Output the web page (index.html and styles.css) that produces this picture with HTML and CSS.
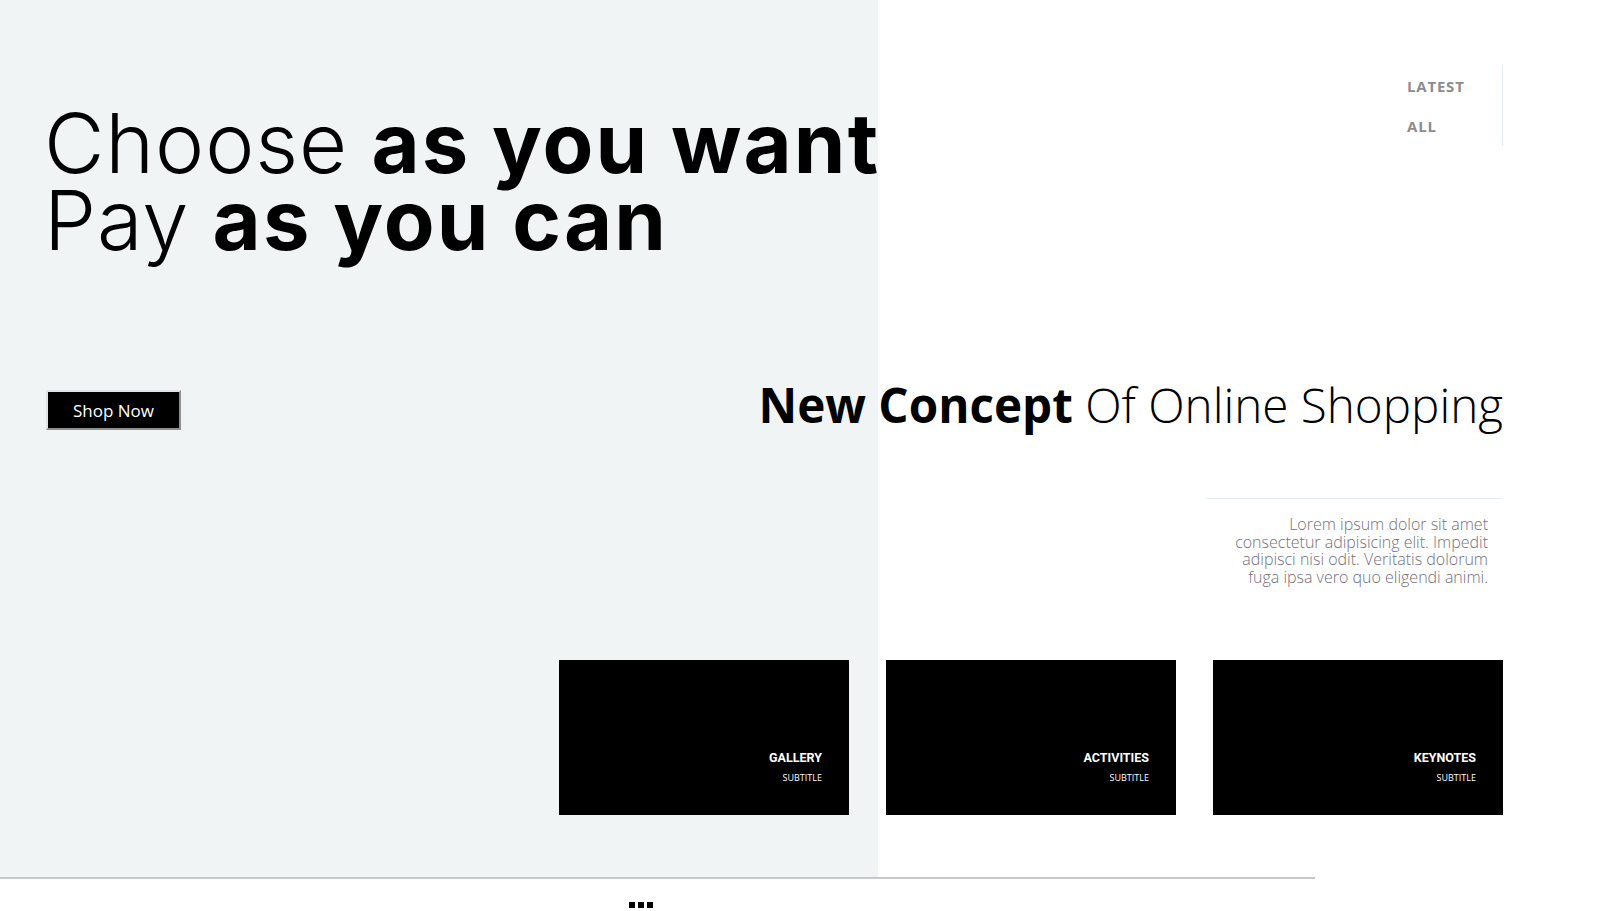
FILE: index.html
```html
<!DOCTYPE html>
<html lang="en">
<head>
<meta charset="utf-8">
<title>Choose as you want</title>
<link rel="stylesheet" href="styles.css">
</head>
<body>
<div class="page">
  <section class="hero">
    <div class="top">
      <h1 class="title"><span class="light">Choose</span> <b>as you want</b><br><span class="light">Pay</span> <b>as you can</b></h1>
      <nav class="filters">
        <a class="filter">LATEST</a>
        <a class="filter">ALL</a>
      </nav>
    </div>
    <div class="mid">
      <button class="shop" type="button">Shop Now</button>
      <h2 class="concept"><b>New Concept</b> Of Online Shopping</h2>
    </div>
    <div class="intro">
      <p>Lorem ipsum dolor sit amet<br>consectetur adipisicing elit. Impedit<br>adipisci nisi odit. Veritatis dolorum<br>fuga ipsa vero quo eligendi animi.</p>
    </div>
    <div class="cards">
      <a class="card"><span class="card-title">GALLERY</span><span class="card-sub">SUBTITLE</span></a>
      <a class="card"><span class="card-title">ACTIVITIES</span><span class="card-sub">SUBTITLE</span></a>
      <a class="card"><span class="card-title">KEYNOTES</span><span class="card-sub">SUBTITLE</span></a>
    </div>
  </section>
  <hr class="rule">
  <div class="dots"><i></i><i></i><i></i></div>
</div>
</body>
</html>
```

FILE: styles.css
```css
* { box-sizing: border-box; margin: 0; padding: 0; }
html, body { width: 1617px; height: 911px; overflow: hidden; background: #fff; }
body { font-family: "Open Sans", sans-serif; color: #000; }

.page { width: 1617px; }

.hero {
  height: 877px;
  background: linear-gradient(to right, #f1f4f5 0, #f1f4f5 878px, #fff 878px);
  padding: 0 114px 0 44px;
  display: flex;
  flex-direction: column;
}

.top { display: flex; justify-content: space-between; align-items: flex-start; }

.title {
  font-family: Inter, "DejaVu Sans", sans-serif;
  font-size: 83px;
  line-height: 77px;
  height: 154px;
  font-weight: 300;
  margin-top: 105px;
  white-space: nowrap;
}
.title .light { letter-spacing: 0.9px; }
.title b { font-weight: 700; letter-spacing: 2.1px; }

.filters {
  margin-top: 66px;
  width: 96px;
  height: 80px;
  border-right: 1px solid #e2eff1;
  display: flex;
  flex-direction: column;
}
.filter {
  display: block;
  font-size: 15px;
  line-height: 40px;
  font-weight: 700;
  color: #8c8c8c;
  letter-spacing: 0.8px;
}

.mid {
  display: flex;
  justify-content: space-between;
  align-items: flex-start;
  margin-top: 113px;
}
.shop {
  width: 135px;
  height: 40px;
  margin: 18px 0 0 2px;
  background: #000;
  color: #fff;
  font-family: "Open Sans", sans-serif;
  font-size: 17px;
  border: 2px solid;
  border-color: #e2e2e2 #8f8f8f #8f8f8f #e2e2e2;
}
.concept {
  font-size: 47.6px;
  line-height: 60px;
  margin-top: 3px;
  font-weight: 300;
  white-space: nowrap;
}
.concept b { font-weight: 700; }

.intro {
  align-self: flex-end;
  width: 297px;
  margin-top: 63px;
  border-top: 1px solid #e6edf0;
  padding: 17px 15px 0 0;
  text-align: right;
}
.intro p {
  font-size: 16px;
  line-height: 17.5px;
  font-weight: 300;
  color: #75707d;
}

.cards {
  margin-top: auto;
  margin-bottom: 62px;
  align-self: flex-end;
  display: grid;
  grid-template-columns: repeat(3, 290px);
  gap: 37px;
}
.card {
  height: 155px;
  background: #000;
  color: #fff;
  display: flex;
  flex-direction: column;
  align-items: flex-end;
  justify-content: flex-end;
  padding: 0 27px 32px 0;
}
.card-title {
  font-family: Roboto, sans-serif;
  font-weight: 700;
  font-size: 12.5px;
  line-height: 14px;
}
.card-sub {
  margin-top: 8px;
  font-size: 9px;
  line-height: 10px;
}

.rule {
  width: 1315px;
  height: 2px;
  border: 0;
  background: #c8c8c8;
}

.dots {
  display: flex;
  gap: 3px;
  padding: 23px 0 0 629px;
}
.dots i { width: 6px; height: 6px; background: #000; display: block; }
```
